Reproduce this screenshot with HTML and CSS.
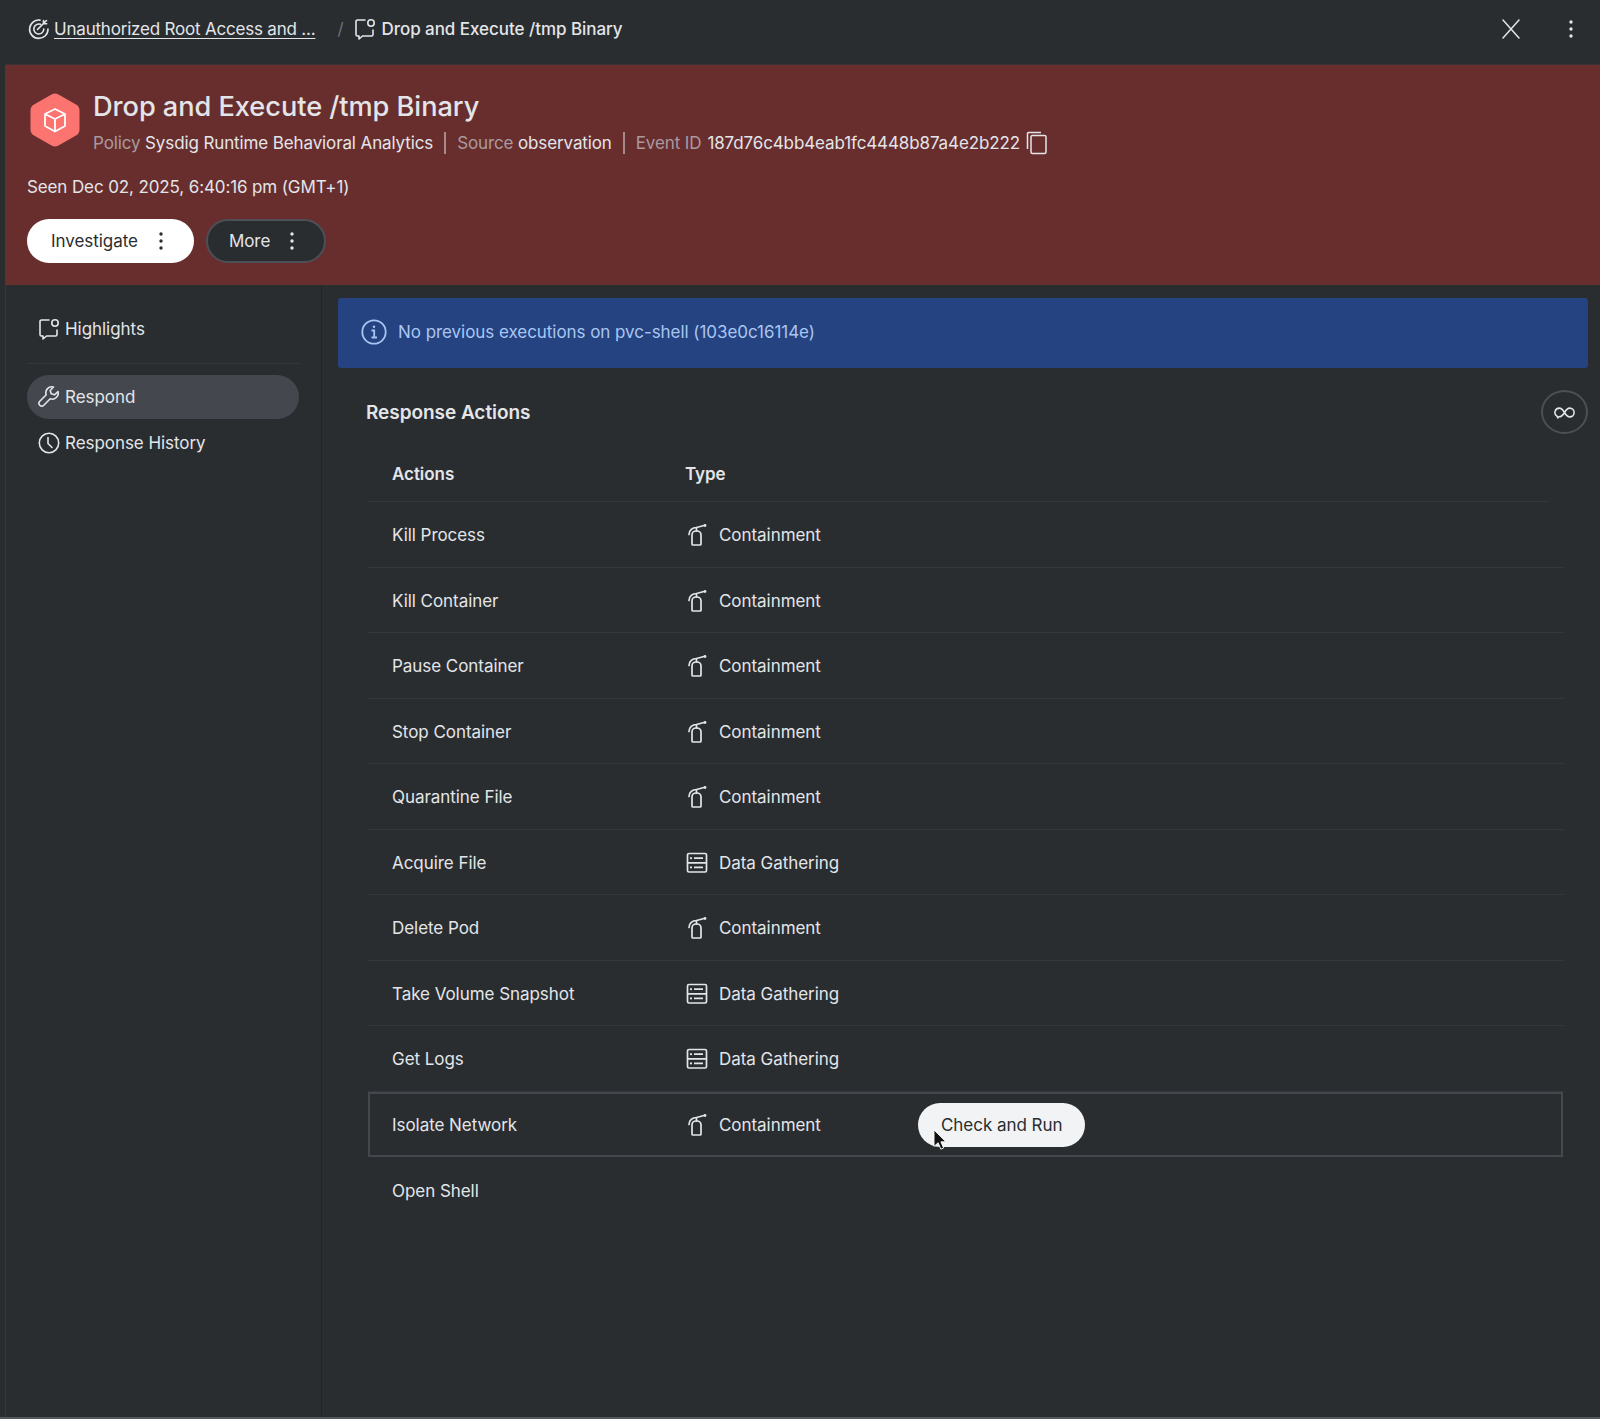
FILE: index.html
```html
<!DOCTYPE html>
<html lang="en">
<head>
    <meta charset="UTF-8">
    <title>Drop and Execute /tmp Binary</title>
    <link rel="stylesheet" href="styles.css">
</head>
<body>
    <svg class="defs" width="0" height="0">
        <symbol id="i-bubble" viewBox="0 0 24 24">
            <path d="M12 3H4.500A1.500 1.500 0 0 0 3 4.500v13A1.500 1.500 0 0 0 4.500 19H6v3l3.500-3h9a1.500 1.500 0 0 0 1.500-1.500V13" fill="none" stroke="currentColor" stroke-width="1.600" stroke-linecap="round" stroke-linejoin="round"/>
            <circle cx="18" cy="6" r="3.200" fill="none" stroke="currentColor" stroke-width="1.600"/>
        </symbol>
        <symbol id="i-ext" viewBox="0 0 24 24">
            <path d="M7 21V12A4 4 0 0 1 11 8h1A4 4 0 0 1 16 12V21a1 1 0 0 1-1 1H8a1 1 0 0 1-1-1z" fill="none" stroke="currentColor" stroke-width="1.700" stroke-linejoin="round"/>
            <path d="M11.500 8V4.500M11.500 4.500l7.500-2M11.500 4.500C7.500 4.500 4 7 4 11.500" fill="none" stroke="currentColor" stroke-width="1.700" stroke-linecap="round"/>
            <circle cx="20" cy="2.500" r="1.400" fill="currentColor"/>
        </symbol>
        <symbol id="i-data" viewBox="0 0 24 24">
            <rect x="2.500" y="2.500" width="19" height="18.500" rx="1.500" fill="none" stroke="currentColor" stroke-width="1.700"/>
            <path d="M2.500 11.800h19M9 7.200h9M9 16.400h9" fill="none" stroke="currentColor" stroke-width="1.700"/>
            <circle cx="6" cy="7.200" r="1.100" fill="currentColor"/>
            <circle cx="6" cy="16.400" r="1.100" fill="currentColor"/>
        </symbol>
        <symbol id="i-dots" viewBox="0 0 6 20">
            <circle cx="3" cy="3" r="1.700" fill="currentColor"/>
            <circle cx="3" cy="10" r="1.700" fill="currentColor"/>
            <circle cx="3" cy="17" r="1.700" fill="currentColor"/>
        </symbol>
    </svg>

    <div class="app">
        <header class="topbar">
            <nav class="crumbs">
                <svg class="icon" viewBox="0 0 24 24" fill="none" stroke="currentColor" stroke-width="1.600" stroke-linecap="round" stroke-linejoin="round">
                    <path d="M13 3.100A9.200 9.200 0 1 0 21 12"/>
                    <path d="M13.500 7.300A5 5 0 1 0 16.800 12"/>
                    <path d="M10.500 12.500l9-9M16.500 3.500v3.200h3.200"/>
                </svg>
                <a class="crumb-link" href="#">Unauthorized Root Access and ...</a>
                <span class="crumb-sep">/</span>
                <svg class="icon"><use href="#i-bubble"/></svg>
                <span class="crumb-current">Drop and Execute /tmp Binary</span>
            </nav>
            <div class="top-actions">
                <svg class="close" viewBox="0 0 20 20" fill="none" stroke="currentColor" stroke-width="1.500" stroke-linecap="round"><path d="M2 1l16 18M18 1L2 19"/></svg>
                <svg class="dots"><use href="#i-dots"/></svg>
            </div>
        </header>

        <section class="banner">
            <div class="banner-head">
                <svg class="hex" viewBox="0 0 50 54">
                    <path d="M21.500 1.500a7 7 0 0 1 7 0l17.500 10a7 7 0 0 1 3.500 6v19a7 7 0 0 1-3.500 6l-17.500 10a7 7 0 0 1-7 0L4 42.500a7 7 0 0 1-3.500-6v-19a7 7 0 0 1 3.500-6z" fill="#fb7470"/>
                    <path d="M25 16l10 5v12l-10 5.500L15 33V21zM15 21l10 5 10-5M25 26v12.500" fill="none" stroke="#fff" stroke-width="1.800" stroke-linejoin="round"/>
                </svg>
                <div>
                    <h1>Drop and Execute /tmp Binary</h1>
                    <div class="meta">
                        <span><em>Policy</em> Sysdig Runtime Behavioral Analytics</span>
                        <span><em>Source</em> observation</span>
                        <span class="event"><em>Event ID</em> 187d76c4bb4eab1fc4448b87a4e2b222
                            <svg class="copy" viewBox="0 0 22 24" fill="none" stroke="currentColor" stroke-width="1.500"><rect x="5" y="4.500" width="15" height="18" rx="1.500"/><path d="M1.500 18V2.500a1 1 0 0 1 1-1H15"/></svg>
                        </span>
                    </div>
                </div>
            </div>
            <p class="seen">Seen Dec 02, 2025, 6:40:16 pm (GMT+1)</p>
            <div class="banner-btns">
                <button class="btn btn-light">Investigate <svg class="dots"><use href="#i-dots"/></svg></button>
                <button class="btn btn-dark">More <svg class="dots"><use href="#i-dots"/></svg></button>
            </div>
        </section>

        <div class="content">
            <aside class="sidebar">
                <a class="side-item" href="#"><svg class="icon"><use href="#i-bubble"/></svg>Highlights</a>
                <hr class="side-line">
                <a class="side-item active" href="#">
                    <svg class="icon" viewBox="0 0 24 24" fill="none" stroke="currentColor" stroke-width="1.600" stroke-linejoin="round"><path d="M21 6.500l-3.500 3.300-3.300-1-1-3.300L16.500 2a6 6 0 0 0-7.300 7.800L2.800 16.200a2.800 2.800 0 0 0 4 4l6.400-6.400A6 6 0 0 0 21 6.500z"/></svg>
                    Respond
                </a>
                <a class="side-item" href="#">
                    <svg class="icon" viewBox="0 0 24 24" fill="none" stroke="currentColor" stroke-width="1.600" stroke-linecap="round" stroke-linejoin="round"><circle cx="12" cy="12" r="9.700"/><path d="M11 6.500v6l4 4"/></svg>
                    Response History
                </a>
            </aside>

            <main class="main">
                <div class="alert">
                    <svg class="alert-icon" viewBox="0 0 26 26" fill="none" stroke="currentColor" stroke-width="1.800"><circle cx="13" cy="13" r="11.700"/><path d="M10.500 11.500H13.200V18.500M10.500 18.500H16"/><circle cx="13" cy="7.800" r="1.200" fill="currentColor" stroke="none"/></svg>
                    No previous executions on pvc-shell (103e0c16114e)
                </div>

                <div class="section-head">
                    <h2>Response Actions</h2>
                    <span class="round-btn">
                        <svg viewBox="0 0 24 14" fill="none" stroke="currentColor" stroke-width="1.800"><path d="M12 7C10 3.500 8.500 2 6 2a5 5 0 0 0-2.500 9.300L4.500 13l1-1.100C8.500 12 10 10.500 12 7c2 3.500 3.500 5 6 5a5 5 0 0 0 0-10c-2.500 0-4 1.500-6 5z"/></svg>
                    </span>
                </div>

                <div class="table">
                    <div class="thead"><span class="col-action">Actions</span><span>Type</span></div>
                    <div class="row"><span class="col-action">Kill Process</span><span class="type"><svg class="icon"><use href="#i-ext"/></svg>Containment</span></div>
                    <div class="row"><span class="col-action">Kill Container</span><span class="type"><svg class="icon"><use href="#i-ext"/></svg>Containment</span></div>
                    <div class="row"><span class="col-action">Pause Container</span><span class="type"><svg class="icon"><use href="#i-ext"/></svg>Containment</span></div>
                    <div class="row"><span class="col-action">Stop Container</span><span class="type"><svg class="icon"><use href="#i-ext"/></svg>Containment</span></div>
                    <div class="row"><span class="col-action">Quarantine File</span><span class="type"><svg class="icon"><use href="#i-ext"/></svg>Containment</span></div>
                    <div class="row"><span class="col-action">Acquire File</span><span class="type"><svg class="icon"><use href="#i-data"/></svg>Data Gathering</span></div>
                    <div class="row"><span class="col-action">Delete Pod</span><span class="type"><svg class="icon"><use href="#i-ext"/></svg>Containment</span></div>
                    <div class="row"><span class="col-action">Take Volume Snapshot</span><span class="type"><svg class="icon"><use href="#i-data"/></svg>Data Gathering</span></div>
                    <div class="row"><span class="col-action">Get Logs</span><span class="type"><svg class="icon"><use href="#i-data"/></svg>Data Gathering</span></div>
                    <div class="row row-hover">
                        <span class="col-action">Isolate Network</span>
                        <span class="type"><svg class="icon"><use href="#i-ext"/></svg>Containment</span>
                        <button class="run-btn">Check and Run
                            <svg class="cursor" viewBox="0 0 14 24"><path d="M1 1v18l4.500-4 3 7 3-1.300-3-6.700H14z" fill="#111" stroke="#fff" stroke-width="1"/></svg>
                        </button>
                    </div>
                    <div class="row row-last"><span class="col-action">Open Shell</span></div>
                </div>
            </main>
        </div>
    </div>
</body>
</html>
```

FILE: styles.css
```css
* {
    box-sizing: border-box;
}

html, body {
    margin: 0;
    height: 100%;
}

body {
    font-family: 'Inter', 'Noto Sans', sans-serif;
    font-size: 17px;
    letter-spacing: -0.05px;
    color: #e3e5e9;
    background: #292d30;
    overflow: hidden;
}

a {
    color: inherit;
    text-decoration: none;
}

.defs {
    position: absolute;
}

.icon {
    width: 24px;
    height: 24px;
    flex: none;
}

.dots {
    width: 6px;
    height: 20px;
    flex: none;
}

.app {
    height: 1419px;
    padding-left: 5px;
    border-bottom: 2px solid #55585b;
    display: flex;
    flex-direction: column;
}

/* top bar */
.topbar {
    height: 64px;
    padding: 0 26px 6px 22px;
    display: flex;
    align-items: center;
    justify-content: space-between;
}

.crumbs {
    display: flex;
    align-items: center;
    gap: 3px;
}

.crumb-link {
    text-decoration: underline;
    text-underline-offset: 3px;
    letter-spacing: -0.2px;
}

.crumb-sep {
    color: #6d7177;
    margin: 0 6px 0 19px;
}

.crumb-current {
    font-weight: 500;
    margin-left: 2px;
}

.top-actions {
    display: flex;
    align-items: center;
    gap: 47px;
}

.close {
    width: 20px;
    height: 20px;
}

/* red banner */
.banner {
    height: 221px;
    padding: 28px 22px 0;
    background: #682e2e;
    border-top: 1px solid #3a3234;
}

.banner-head {
    display: flex;
    gap: 13px;
}

.hex {
    width: 50px;
    height: 54px;
    flex: none;
    margin-left: 3px;
}

h1 {
    margin: 0;
    font-size: 27.2px;
    font-weight: 500;
    line-height: 28px;
}

.meta {
    margin-top: 10px;
    display: flex;
    align-items: center;
    line-height: 22px;
    letter-spacing: -0.12px;
}

.meta span {
    padding-right: 11px;
    margin-right: 11px;
    border-right: 2px solid #a98a8a;
}

.meta .event {
    border: 0;
    display: flex;
    align-items: center;
    gap: 6px;
}

.meta em {
    font-style: normal;
    color: #a99a9e;
}

.copy {
    width: 22px;
    height: 24px;
}

.seen {
    margin: 20px 0 0;
    line-height: 24px;
    letter-spacing: -0.12px;
}

.banner-btns {
    margin-top: 20px;
    display: flex;
    gap: 12px;
}

.btn {
    height: 44px;
    border-radius: 22px;
    font: inherit;
    letter-spacing: inherit;
    display: flex;
    align-items: center;
}

.btn-light {
    padding: 0 30px 0 24px;
    gap: 20px;
    background: #fff;
    border: 0;
    color: #292d30;
}

.btn-dark {
    padding: 0 29px 0 21px;
    gap: 19px;
    background: #292d30;
    border: 2px solid #4c5056;
    color: #e3e5e9;
}

/* sidebar + main */
.content {
    flex: 1;
    display: flex;
}

.sidebar {
    width: 317px;
    flex: none;
    padding: 22px 22px 0 21px;
    border-left: 1px solid #33373a;
    border-right: 1px solid #232629;
    display: flex;
    flex-direction: column;
}

.side-item {
    height: 44px;
    padding: 0 10px;
    border-radius: 22px;
    display: flex;
    align-items: center;
    gap: 4px;
    margin-bottom: 2px;
}

.side-item.active {
    background: #44484e;
}

.side-line {
    width: 100%;
    margin: 10px 0 11px;
    border: 0;
    border-top: 1px solid #36393c;
}

.main {
    flex: 1;
    padding: 13px 12px 0 16px;
}

.alert {
    height: 70px;
    padding: 0 23px 3px;
    background: #254281;
    border-radius: 3px;
    color: #a9c6f2;
    display: flex;
    align-items: center;
    gap: 11px;
}

.alert-icon {
    width: 26px;
    height: 26px;
}

.section-head {
    height: 44px;
    margin-top: 22px;
    padding-left: 28px;
    display: flex;
    align-items: center;
    justify-content: space-between;
}

h2 {
    margin: 0;
    font-size: 19px;
    font-weight: 600;
}

.round-btn {
    width: 47px;
    height: 44px;
    border: 2px solid #4c5056;
    border-radius: 50%;
    display: flex;
    align-items: center;
    justify-content: center;
}

.round-btn svg {
    width: 21px;
    height: 13px;
}

.table {
    margin: 15px 25px 0 30px;
}

.thead, .row {
    display: flex;
    align-items: center;
    padding-left: 24px;
}

.thead {
    height: 53px;
    margin-right: 14px;
    padding-bottom: 2px;
    font-weight: 600;
    border-bottom: 1px solid #36393c;
}

.row {
    height: 65.5px;
    padding-top: 2px;
    border-bottom: 1px solid #36393c;
}

.col-action {
    width: 293px;
    flex: none;
}

.type {
    width: 233px;
    flex: none;
    display: flex;
    align-items: center;
    gap: 10px;
}

.row-hover {
    outline: 2px solid #44484e;
    outline-offset: -2px;
    border-bottom: 0;
}

.row-last {
    border-bottom: 0;
}

.run-btn {
    position: relative;
    height: 44px;
    padding: 0 23px;
    border: 0;
    border-radius: 22px;
    background: #f1f3f5;
    color: #292d30;
    font: inherit;
    letter-spacing: inherit;
}

.cursor {
    position: absolute;
    left: 15px;
    top: 26px;
    width: 13px;
    height: 22px;
}
```
